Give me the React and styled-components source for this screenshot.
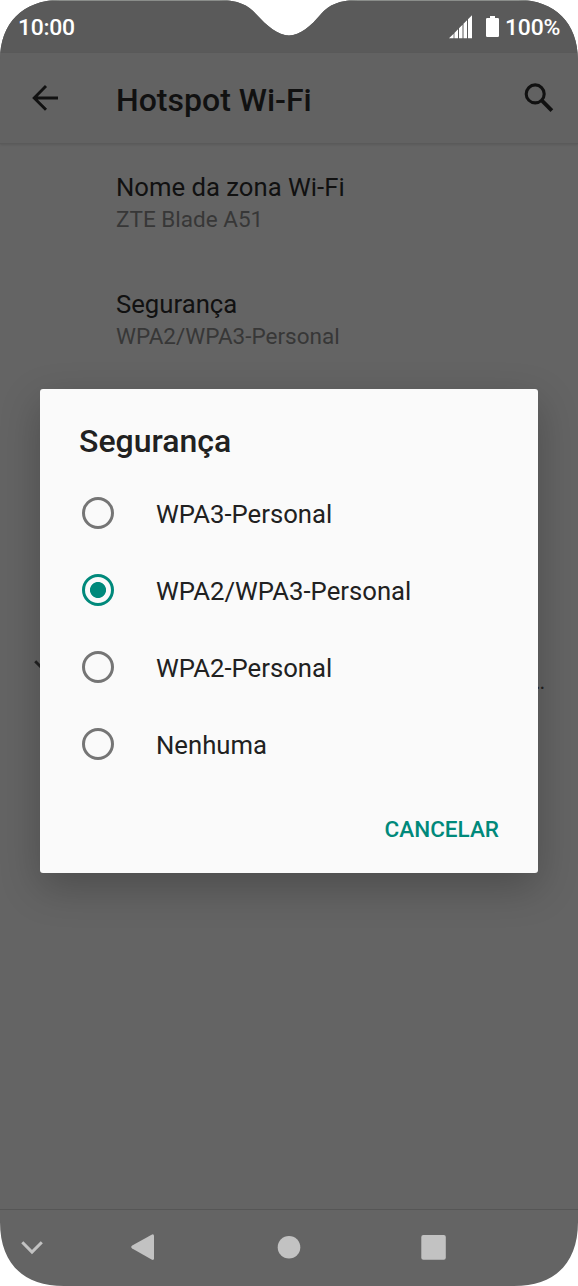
import React from 'react';
import styled, { createGlobalStyle } from 'styled-components';

const options = ['WPA3-Personal', 'WPA2/WPA3-Personal', 'WPA2-Personal', 'Nenhuma'];

const App = () => (
	<>
		<GlobalStyle />
		<Phone>
			<StatusBar>
				<Clock>10:00</Clock>
				<StatusIcons>
					<SignalIcon />
					<BatteryIcon />
					<Percent>100%</Percent>
				</StatusIcons>
			</StatusBar>
			<AppBar>
				<BackIcon />
				<PageTitle>Hotspot Wi-Fi</PageTitle>
				<SearchIcon />
			</AppBar>
			<Settings>
				<Setting>
					<SettingName>Nome da zona Wi-Fi</SettingName>
					<SettingValue>ZTE Blade A51</SettingValue>
				</Setting>
				<Setting>
					<SettingName>Segurança</SettingName>
					<SettingValue>WPA2/WPA3-Personal</SettingValue>
				</Setting>
				<Advanced>
					<ExpandIcon />
					<Ellipsis>…</Ellipsis>
				</Advanced>
			</Settings>
			<NavBar>
				<NavIcons />
			</NavBar>
			<Dialog role="dialog">
				<DialogTitle>Segurança</DialogTitle>
				{options.map((option, i) => (
					<Option key={option}>
						<Radio $checked={i === 1} />
						<OptionLabel>{option}</OptionLabel>
					</Option>
				))}
				<Actions>
					<CancelButton>CANCELAR</CancelButton>
				</Actions>
			</Dialog>
		</Phone>
	</>
);

export default App;

const SignalIcon = () => (
	<svg width="24" height="24" viewBox="0 0 24 24" fill="#fff">
		<path d="M0 23.3 L4.6 18.7 V23.3Z M5.4 17.9 L9 14.3 V23.3 H5.4Z M10 13.3 L13.5 9.8 V23.3 H10Z M14.5 8.8 L18 5.3 V23.3 H14.5Z M19 4.3 L23 0.3 V23.3 H19Z" />
	</svg>
);

const BatteryIcon = () => (
	<Battery width="13" height="21" viewBox="0 0 13 21" fill="#fff">
		<path d="M4 0 H9 V2 H11.7 Q13 2 13 3.3 V19.7 Q13 21 11.7 21 H1.3 Q0 21 0 19.7 V3.3 Q0 2 1.3 2 H4Z" />
	</Battery>
);

const BackIcon = () => (
	<svg width="26" height="26" viewBox="0 0 26 26" fill="none" stroke="#111" strokeWidth="2.9">
		<path d="M26 13 H2.5 M14 1.1 L2.2 13 L14 24.8" />
	</svg>
);

const SearchIcon = () => (
	<svg width="30" height="30" viewBox="0 0 30 30" fill="none" stroke="#111">
		<circle cx="11.2" cy="10.9" r="9" strokeWidth="3.1" />
		<path d="M17.7 17.4 L27.9 27.6" strokeWidth="3.9" />
	</svg>
);

const ExpandIcon = () => (
	<svg width="22" height="14" viewBox="0 0 22 14" fill="none" stroke="#222" strokeWidth="2.9">
		<path d="M1.2 1.2 L11 11 L20.8 1.2" />
	</svg>
);

const NavIcons = () => (
	<svg width="578" height="74" viewBox="0 0 578 74" fill="#c2c2c2">
		<path d="M22.3 32.2 L32 42 L41.8 32.2" fill="none" stroke="#c2c2c2" strokeWidth="3" />
		<path d="M132.2 35.5 L151.6 24.7 Q154 23.6 154 26 V48.3 Q154 50.7 151.6 49.6 L132.2 38.4 Q130.2 37 132.2 35.5Z" />
		<circle cx="289" cy="37.3" r="11.3" />
		<rect x="421.3" y="25" width="24.5" height="24.7" rx="2" />
	</svg>
);

const GlobalStyle = createGlobalStyle`
	body {
		margin: 0;
		background: #fff;
		font-family: Roboto, sans-serif;
	}
	svg {
		display: block;
		flex-shrink: 0;
	}
`;

/* Rounded screen with the camera notch cut out of its top edge */
const Phone = styled.div`
	position: relative;
	display: flex;
	flex-direction: column;
	width: 578px;
	height: 1286px;
	overflow: hidden;
	background: #646464;
	clip-path: path('M60 0 H219 C238 0 248 5 256 14 C267 26 278 35.5 289 35.5 C300 35.5 311 26 321 14 C329 5 339 0 358 0 H518 C555 0 578 23 578 60 V1222 C578 1263 555 1286 514 1286 H64 C23 1286 0 1263 0 1222 V60 C0 23 23 0 60 0Z');
`;

const StatusBar = styled.div`
	box-sizing: border-box;
	display: flex;
	justify-content: space-between;
	height: 53px;
	padding: 14px 18px 0;
	background: #5a5a5a;
	border-top: 1px solid #8a8d8a;
	color: #fff;
	font-size: 22.9px;
	font-weight: 500;
	line-height: 26px;
	letter-spacing: -0.25px;
`;

const Clock = styled.span`
	white-space: nowrap;
`;

const StatusIcons = styled.div`
	display: flex;
`;

const Percent = styled.span`
	margin-left: 6px;
`;

const Battery = styled.svg`
	margin: 1px 0 0 13px;
`;

const AppBar = styled.header`
	box-sizing: border-box;
	display: flex;
	align-items: center;
	height: 91px;
	padding: 0 24px 0 32px;
	background: #626262;
	border-bottom: 1px solid #5a5a5a;
	box-shadow: 0 1px 2px rgba(0, 0, 0, 0.1);
`;

const PageTitle = styled.h1`
	flex: 1;
	margin: 3px 0 0 58px;
	color: #111;
	font-size: 32px;
	font-weight: 500;
	line-height: 38px;
`;

const Settings = styled.main`
	display: flex;
	flex: 1;
	flex-direction: column;
	padding: 27px 32px 0;
`;

const Setting = styled.div`
	display: flex;
	flex-direction: column;
	height: 117px;
	padding-left: 84px;
`;

const SettingName = styled.span`
	color: #111;
	font-size: 25.7px;
	line-height: 32px;
`;

const SettingValue = styled.span`
	color: #373737;
	font-size: 22.5px;
	line-height: 32px;
`;

const Advanced = styled.div`
	display: flex;
	align-items: flex-start;
	justify-content: space-between;
	padding-top: 255px;
	padding-right: 1px;
	padding-left: 2px;
`;

const Ellipsis = styled.span`
	margin-top: 8px;
	color: #222;
	font-size: 22.5px;
	line-height: 26px;
`;

const NavBar = styled.nav`
	flex-shrink: 0;
	box-sizing: border-box;
	height: 77px;
	border-top: 1px solid #565656;
`;

const Dialog = styled.div`
	position: absolute;
	top: 389px;
	left: 40px;
	box-sizing: border-box;
	display: flex;
	flex-direction: column;
	width: 498px;
	height: 484px;
	padding: 33px 39px 0;
	background: #fafafa;
	border-radius: 3px;
	box-shadow: 0 14px 40px rgba(0, 0, 0, 0.24);
`;

const DialogTitle = styled.h2`
	margin: 0 0 14px;
	color: #212121;
	font-size: 32px;
	font-weight: 500;
	line-height: 38px;
`;

const Option = styled.label`
	display: flex;
	align-items: center;
	height: 77.1px;
	padding-left: 3px;
`;

const Radio = styled.span`
	box-sizing: border-box;
	width: 32px;
	height: 32px;
	border: 3px solid ${({ $checked }) => ($checked ? '#00897b' : '#757575')};
	border-radius: 50%;
	background: ${({ $checked }) => ($checked ? 'radial-gradient(circle, #00897b 7.6px, transparent 8.4px)' : 'none')};
`;

const OptionLabel = styled.span`
	margin-left: 42px;
	padding-top: 2px;
	color: #212121;
	font-size: 25.7px;
	line-height: 32px;
`;

const Actions = styled.div`
	display: flex;
	justify-content: flex-end;
	margin-top: 34px;
`;

const CancelButton = styled.button`
	padding: 0;
	border: 0;
	background: none;
	color: #00897b;
	font-family: inherit;
	font-size: 22.5px;
	font-weight: 500;
	line-height: 26px;
`;
